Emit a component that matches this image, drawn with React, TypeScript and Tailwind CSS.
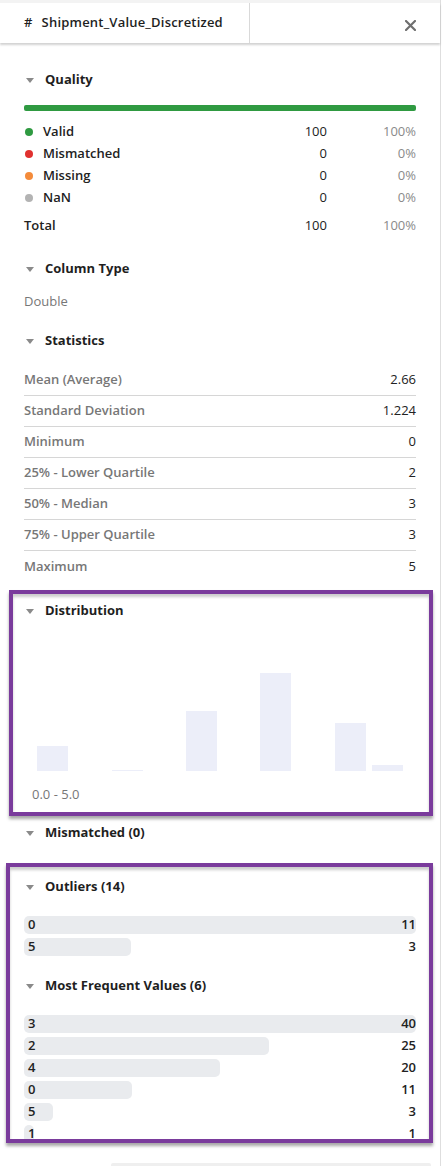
const font = "font-['Open_Sans','Liberation_Sans',sans-serif]";

function Caret() {
  return (
    <svg width="8" height="5" viewBox="0 0 8 5" className="mr-[11px] ml-[2px] shrink-0">
      <path d="M0 0 L8 0 L4 5 Z" fill="#8a8a8a" />
    </svg>
  );
}

function Heading({ children }: { children: React.ReactNode }) {
  return (
    <div className="flex h-[20px] items-center text-[13px] font-bold text-[#1f1f1f]">
      <Caret />
      {children}
    </div>
  );
}

const quality = [
  { label: "Valid", color: "bg-[#2f9a41]", count: "100", pct: "100%" },
  { label: "Mismatched", color: "bg-[#e0312f]", count: "0", pct: "0%" },
  { label: "Missing", color: "bg-[#f48b3a]", count: "0", pct: "0%" },
  { label: "NaN", color: "bg-[#b3b3b3]", count: "0", pct: "0%" },
];

const stats = [
  ["Mean (Average)", "2.66"],
  ["Standard Deviation", "1.224"],
  ["Minimum", "0"],
  ["25% - Lower Quartile", "2"],
  ["50% - Median", "3"],
  ["75% - Upper Quartile", "3"],
  ["Maximum", "5"],
];

const bins = [
  { x: 13, h: 25 },
  { x: 88, h: 1 },
  { x: 162, h: 60 },
  { x: 236, h: 98 },
  { x: 311, h: 48 },
  { x: 348, h: 6 },
];

const outliers = [
  { v: "0", n: 11 },
  { v: "5", n: 3 },
];

const frequent = [
  { v: "3", n: 40 },
  { v: "2", n: 25 },
  { v: "4", n: 20 },
  { v: "0", n: 11 },
  { v: "5", n: 3 },
  { v: "1", n: 1 },
];

function BarList({ items, max }: { items: { v: string; n: number }[]; max: number }) {
  return (
    <div className="flex flex-col gap-[4px]">
      {items.map((it, i) => (
        <div key={i} className="relative flex h-[18px] items-center justify-between text-[13px] font-semibold text-[#222]">
          <div
            className="absolute left-0 top-0 h-full rounded-[5px] bg-[#e9ebee]"
            style={{ width: `${Math.max((it.n / max) * 100, 2.5)}%` }}
          />
          <span className="relative pl-[4px]">{it.v}</span>
          <span className="relative">{it.n}</span>
        </div>
      ))}
    </div>
  );
}

export default function App() {
  return (
    <div className={`relative h-[1166px] w-[444px] overflow-hidden bg-white ${font}`}>
      <div className="h-full w-[441px] border-r border-[#dedede]">
        <div className="h-[3px] bg-[#f3f3f3]" />
        {/* header */}
        <div className="relative z-10 flex h-[40px] bg-white shadow-[0_2px_2px_rgba(0,0,0,0.18)]">
          <div className="flex w-[250px] items-center border-r border-[#d9d9d9] pl-[24px] text-[13px] font-semibold tracking-[0.2px] text-[#1f1f1f]">
            <span className="mr-[9px]">#</span>
            Shipment_Value_Discretized
          </div>
          <div className="flex flex-1 items-center justify-end pr-[24px] pt-[4px]">
            <svg width="11" height="11" viewBox="0 0 11 11">
              <path d="M1 1 L10 10 M10 1 L1 10" stroke="#6f6f6f" strokeWidth="2.2" strokeLinecap="round" />
            </svg>
          </div>
        </div>

        <div className="px-[24px]">
          {/* quality */}
          <div className="mt-[27px]">
            <Heading>Quality</Heading>
          </div>
          <div className="mt-[15px] h-[6px] rounded-[2px] bg-[#2f9a41]" />
          <div className="mt-[10px]">
            {quality.map((q) => (
              <div key={q.label} className="flex h-[22px] items-center text-[13px] text-[#222]">
                <span className={`mr-[10px] ml-[1px] h-[8px] w-[8px] rounded-full ${q.color}`} />
                <span className="flex-1 font-semibold">{q.label}</span>
                <span className="w-[60px] text-right">{q.count}</span>
                <span className="w-[89px] text-right text-[#8a8a8a]">{q.pct}</span>
              </div>
            ))}
          </div>
          <div className="mt-[6px] flex h-[22px] items-center text-[13px] text-[#222]">
            <span className="flex-1 font-semibold">Total</span>
            <span className="w-[60px] text-right">100</span>
            <span className="w-[89px] text-right text-[#8a8a8a]">100%</span>
          </div>

          {/* column type */}
          <div className="mt-[22px]">
            <Heading>Column Type</Heading>
          </div>
          <div className="mt-[13px] flex h-[20px] items-center text-[13px] text-[#777]">Double</div>

          {/* statistics */}
          <div className="mt-[19px]">
            <Heading>Statistics</Heading>
          </div>
          <div className="mt-[14px]">
            {stats.map(([k, v], i) => (
              <div
                key={k}
                className={`flex h-[31px] items-center justify-between text-[13px] ${i < stats.length - 1 ? "border-b border-[#d6d6d6]" : ""}`}
              >
                <span className="font-semibold text-[#777]">{k}</span>
                <span className="text-[#222]">{v}</span>
              </div>
            ))}
          </div>

          {/* distribution */}
          <div className="mt-[19px]">
            <Heading>Distribution</Heading>
          </div>
          <svg width="392" height="150" viewBox="0 0 392 150" className="block">
            {bins.map((b, i) => (
              <rect key={i} x={b.x} y={150 - b.h} width="31" height={b.h} fill="#eceef9" />
            ))}
          </svg>
          <div className="mt-[14px] flex h-[20px] items-center pl-[8px] text-[13px] text-[#777]">0.0 - 5.0</div>

          {/* mismatched */}
          <div className="mt-[18px]">
            <Heading>Mismatched (0)</Heading>
          </div>

          {/* outliers */}
          <div className="mt-[34px]">
            <Heading>Outliers (14)</Heading>
          </div>
          <div className="mt-[19px]">
            <BarList items={outliers} max={11} />
          </div>

          {/* most frequent */}
          <div className="mt-[20px]">
            <Heading>Most Frequent Values (6)</Heading>
          </div>
          <div className="mt-[19px]">
            <BarList items={frequent} max={40} />
          </div>
        </div>
      </div>

      {/* cover below the second box, then annotation boxes on top */}
      <div className="absolute left-[6px] top-[1139px] h-[24px] w-[430px] bg-white" />
      <div className="absolute left-[111px] top-[1163px] h-[3px] w-[320px] rounded-t-[2px] bg-[#efefef]" />
      <div className="pointer-events-none absolute left-[9px] top-[590px] h-[226px] w-[424px] border-[4px] border-[#7a3b9c] shadow-[0_3px_3px_rgba(0,0,0,0.35),inset_0_3px_3px_rgba(0,0,0,0.2)]" />
      <div className="pointer-events-none absolute left-[6px] top-[863px] h-[280px] w-[427px] border-[4px] border-[#7a3b9c] shadow-[0_3px_3px_rgba(0,0,0,0.35),inset_0_3px_3px_rgba(0,0,0,0.2)]" />
    </div>
  );
}
